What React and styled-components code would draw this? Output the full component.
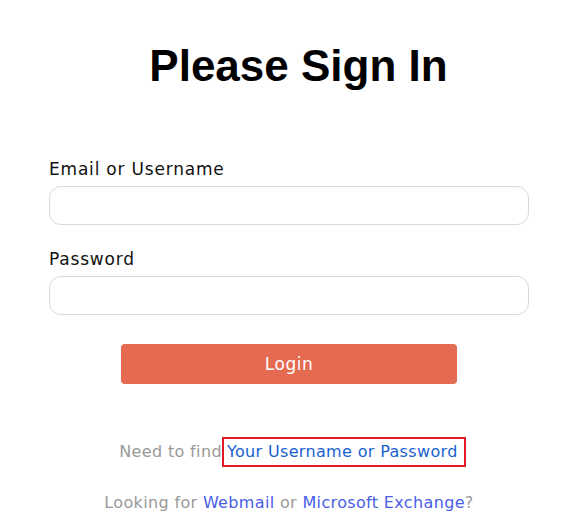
import React from 'react';
import styled, { createGlobalStyle } from 'styled-components';

const GlobalStyle = createGlobalStyle`
  body {
    margin: 0;
    background: #fff;
    font-family: "DejaVu Sans", Verdana, sans-serif;
  }
`;

const Page = styled.div`
  width: 480px;
  padding: 0 41px 0 49px;
`;

const Title = styled.h1`
  margin: 0;
  padding: 39px 0 0 19px;
  font-family: "Liberation Sans", Arial, sans-serif;
  font-size: 44px;
  font-weight: 700;
  line-height: 54px;
  color: #000;
  text-align: center;
`;

const Form = styled.form`
  display: flex;
  flex-direction: column;
  margin-top: 66px;
`;

const Label = styled.label`
  display: block;
  font-size: 17px;
  line-height: 20px;
  letter-spacing: 0.8px;
  color: #111;
  margin-bottom: 7px;
`;

const Field = styled.div`
  margin-bottom: 24px;
`;

const Input = styled.input`
  display: block;
  box-sizing: border-box;
  width: 100%;
  height: 39px;
  border: 1px solid #d9d9d9;
  border-radius: 12px;
  background: #fff;
  outline: none;
`;

const LoginBtn = styled.button`
  align-self: center;
  width: 336px;
  height: 40px;
  margin-top: 5px;
  border: none;
  border-radius: 4px;
  background: #e56a52;
  color: #fff;
  font-family: "DejaVu Sans", Verdana, sans-serif;
  font-size: 17px;
  letter-spacing: 0.5px;
`;

const Help = styled.p`
  margin: ${(p) => p.top}px 0 0;
  padding-left: ${(p) => p.indent || 0}px;
  text-align: center;
  font-size: 16px;
  line-height: 26px;
  letter-spacing: 0.35px;
  color: #999;
`;

const HelpLink = styled.a`
  color: ${(p) => p.color || '#1a5fd0'};
  text-decoration: none;
  ${(p) => p.boxed && `
    display: inline-block;
    border: 2px solid #e01b24;
    padding: 0 6px 0 3px;
  `}
`;

export default function App() {
  return (
    <>
      <GlobalStyle />
      <Page>
        <Title>Please Sign In</Title>
        <Form onSubmit={(e) => e.preventDefault()}>
          <Field>
            <Label>Email or Username</Label>
            <Input type="text" />
          </Field>
          <Field>
            <Label>Password</Label>
            <Input type="password" />
          </Field>
          <LoginBtn type="submit">Login</LoginBtn>
        </Form>
        <Help top={53} indent={7}>
          Need to find<HelpLink boxed href="#">Your Username or Password</HelpLink>
        </Help>
        <Help top={23}>
          Looking for <HelpLink color="#4a5ee8" href="#">Webmail</HelpLink> or{' '}
          <HelpLink color="#4a5ee8" href="#">Microsoft Exchange</HelpLink>?
        </Help>
      </Page>
    </>
  );
}
